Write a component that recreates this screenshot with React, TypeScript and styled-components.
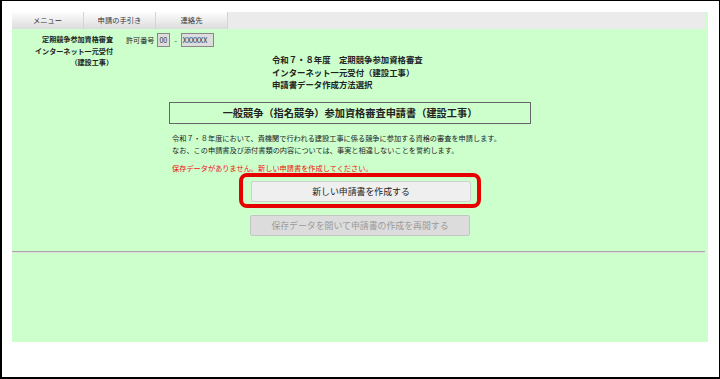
import React from 'react';

import styled, { createGlobalStyle } from 'styled-components';

const GlobalStyle = createGlobalStyle`
  html, body {
    margin: 0;
    padding: 0;
    background: #fff;
  }
  body {
    font-family: "Noto Sans CJK JP", "Noto Sans", sans-serif;
    color: #222;
  }
`;

const Frame = styled.div`
  width: 720px;
  height: 379px;
  box-sizing: border-box;
  border: 1px solid #000;
  border-left-width: 2px;
  border-bottom-width: 2px;
  padding: 11px 0 0 10px;
  background: #fff;
`;

const Panel = styled.div`
  width: 696px;
  height: 330px;
  background: #ccffcc;
  display: flex;
  flex-direction: column;
`;

const NavBar = styled.div`
  display: flex;
  height: 17px;
  margin-right: 3px;
  background: #ebebeb;
`;

const Tab = styled.div`
  width: 72px;
  box-sizing: border-box;
  border-right: 1px solid #d4d4d4;
  background: linear-gradient(#fdfdfd, #dcdcdc);
  font-size: 7.3px;
  line-height: 17px;
  text-align: center;
  color: #333;
`;

const Header = styled.div`
  display: flex;
  margin-top: 4px;
`;

const LeftInfo = styled.div`
  width: 101px;
  padding-top: 1px;
  text-align: right;
  font-size: 7.1px;
  font-weight: bold;
  line-height: 11.5px;
`;

const HeaderMain = styled.div`
  margin-left: 13px;
  display: flex;
  flex-direction: column;
`;

const PermitRow = styled.div`
  display: flex;
  align-items: center;
  font-size: 7.1px;
  height: 14px;
`;

const PermitLabel = styled.span`
  margin-right: 3px;
`;

const PermitBox = styled.span<{ $w: number }>`
  width: ${(p) => p.$w}px;
  height: 14px;
  box-sizing: border-box;
  border: 1px solid #888;
  background: #ddd;
  font-size: 7.1px;
  line-height: 12px;
  padding-left: 1px;
  color: #333;
`;

const Dash = styled.span`
  margin: 0 4px;
`;

const Heading = styled.div`
  margin: 6px 0 0 146px;
  font-size: 8.4px;
  font-weight: bold;
  line-height: 12.5px;
`;

const Content = styled.div`
  margin-left: 157px;
  width: 362px;
`;

const TitleBox = styled.div`
  margin-top: 11px;
  height: 22px;
  box-sizing: border-box;
  border: 1px solid #666;
  text-align: center;
  font-size: 10.2px;
  font-weight: bold;
  line-height: 20px;
  color: #222;
`;

const Paragraph = styled.p`
  margin: 8px 0 0 3px;
  font-size: 7.2px;
  line-height: 12.5px;
  white-space: nowrap;
`;

const Notice = styled.p`
  margin: 6px 0 0 3px;
  font-size: 7.2px;
  line-height: 10px;
  color: #f01010;
  white-space: nowrap;
`;

const Actions = styled.div`
  display: flex;
  flex-direction: column;
  align-items: center;
  gap: 7px;
`;

const Highlight = styled.div`
  width: 242px;
  box-sizing: border-box;
  border: 4px solid #e60000;
  border-radius: 8px;
  padding: 4px 8px 2px;
`;

const Button = styled.div<{ $disabled?: boolean }>`
  width: 220px;
  height: 21px;
  box-sizing: border-box;
  border: 1px solid ${(p) => (p.$disabled ? '#c4c4c4' : '#cfcfcf')};
  border-radius: 2px;
  background: ${(p) => (p.$disabled ? '#dcdcdc' : '#efefef')};
  color: ${(p) => (p.$disabled ? '#9a9a9a' : '#222')};
  font-size: 8.9px;
  line-height: 19px;
  text-align: center;
`;

const Rule = styled.div`
  margin: 15px 3px 0 0;
  height: 0;
  border-top: 1px solid #a8a8a8;
  border-bottom: 1px solid #e0e0e0;
`;

const App: React.FunctionComponent = () => (
  <>
    <GlobalStyle />
    <Frame>
      <Panel>
        <NavBar>
          <Tab>メニュー</Tab>
          <Tab>申請の手引き</Tab>
          <Tab>連絡先</Tab>
        </NavBar>
        <Header>
          <LeftInfo>
            定期競争参加資格審査
            <br />
            インターネット一元受付
            <br />
            （建設工事）
          </LeftInfo>
          <HeaderMain>
            <PermitRow>
              <PermitLabel>許可番号</PermitLabel>
              <PermitBox $w={13}>00</PermitBox>
              <Dash>-</Dash>
              <PermitBox $w={33}>XXXXXX</PermitBox>
            </PermitRow>
            <Heading>
              令和７・８年度　定期競争参加資格審査
              <br />
              インターネット一元受付（建設工事）
              <br />
              申請書データ作成方法選択
            </Heading>
          </HeaderMain>
        </Header>
        <Content>
          <TitleBox>一般競争（指名競争）参加資格審査申請書（建設工事）</TitleBox>
          <Paragraph>
            令和７・８年度において、貴機関で行われる建設工事に係る競争に参加する資格の審査を申請します。
            <br />
            なお、この申請書及び添付書類の内容については、事実と相違しないことを誓約します。
          </Paragraph>
          <Notice>保存データがありません。新しい申請書を作成してください。</Notice>
        </Content>
        <Actions>
          <Highlight>
            <Button>新しい申請書を作成する</Button>
          </Highlight>
          <Button $disabled>保存データを開いて申請書の作成を再開する</Button>
        </Actions>
        <Rule />
      </Panel>
    </Frame>
  </>
);

export default App;
